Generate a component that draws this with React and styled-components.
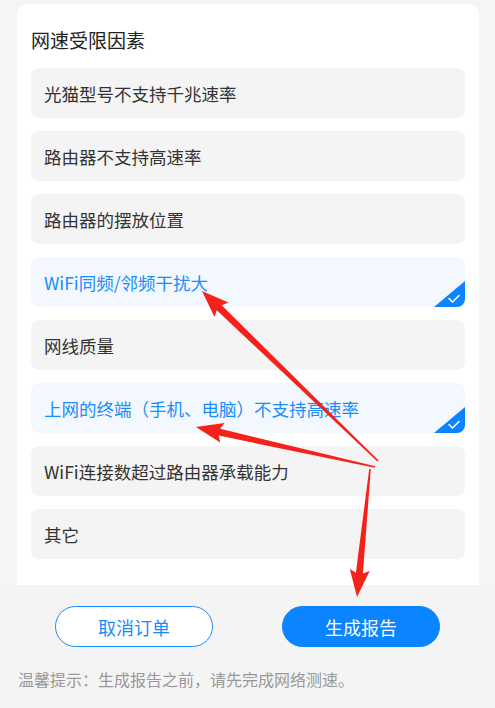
import React from 'react';
import styled, { createGlobalStyle } from 'styled-components';

const GlobalStyle = createGlobalStyle`
  html, body {
    margin: 0;
    padding: 0;
    background: #f5f5f5;
  }
  body {
    font-family: "Noto Sans CJK SC", "Noto Sans", sans-serif;
  }
`;

const Page = styled.div`
  position: relative;
  width: 495px;
  height: 708px;
  overflow: hidden;
  background: #f5f5f5;
  display: flex;
  flex-direction: column;
`;

const Card = styled.section`
  margin: 4px 16px 0 17px;
  padding: 22px 14px 26px;
  background: #fff;
  border-radius: 10px 10px 0 0;
`;

const Title = styled.h2`
  margin: 0 0 14px;
  font-size: 19px;
  font-weight: 400;
  line-height: 28px;
  color: #222;
`;

const List = styled.div`
  display: flex;
  flex-direction: column;
  gap: 13px;
`;

const Item = styled.div`
  position: relative;
  height: 50px;
  display: flex;
  align-items: center;
  padding-left: 13px;
  border-radius: 8px;
  overflow: hidden;
  font-size: 17.5px;
  color: ${p => (p.$active ? '#1a8cff' : '#333')};
  background: ${p => (p.$active ? '#f3f8fe' : '#f4f4f4')};
`;

const Corner = styled.svg`
  position: absolute;
  right: 0;
  bottom: 0;
  width: 31px;
  height: 26px;
`;

const Footer = styled.footer`
  flex: 1;
  background: #f4f4f4;
  padding-top: 21px;
`;

const Buttons = styled.div`
  display: flex;
  justify-content: center;
  gap: 69px;
`;

const Button = styled.button`
  width: 158px;
  height: 41px;
  border-radius: 21px;
  font-family: inherit;
  font-size: 18px;
  border: 1.5px solid #1a8cff;
  color: ${p => (p.$primary ? '#fff' : '#1a8cff')};
  background: ${p => (p.$primary ? '#0a84ff' : '#fff')};
  ${p => p.$primary && 'border-color: #0a84ff;'}
`;

const Hint = styled.p`
  margin: 20px 0 0 18px;
  font-size: 16px;
  line-height: 24px;
  color: #999;
`;

const Overlay = styled.svg`
  position: absolute;
  left: 0;
  top: 0;
  width: 495px;
  height: 708px;
  pointer-events: none;
`;

const items = [
  { text: '光猫型号不支持千兆速率' },
  { text: '路由器不支持高速率' },
  { text: '路由器的摆放位置' },
  { text: 'WiFi同频/邻频干扰大', active: true },
  { text: '网线质量' },
  { text: '上网的终端（手机、电脑）不支持高速率', active: true },
  { text: 'WiFi连接数超过路由器承载能力' },
  { text: '其它' },
];

function arrowPoints([x1, y1], [x2, y2]) {
  const dx = x2 - x1;
  const dy = y2 - y1;
  const len = Math.hypot(dx, dy);
  const ux = dx / len;
  const uy = dy / len;
  const nx = -uy;
  const ny = ux;
  const head = 24;
  const headW = 10;
  const tailW = 0.8;
  const neckW = 3.5;
  const bx = x2 - ux * head;
  const by = y2 - uy * head;
  const pts = [
    [x1 + nx * tailW, y1 + ny * tailW],
    [bx + nx * neckW, by + ny * neckW],
    [bx + nx * headW - ux * 3, by + ny * headW - uy * 3],
    [x2, y2],
    [bx - nx * headW - ux * 3, by - ny * headW - uy * 3],
    [bx - nx * neckW, by - ny * neckW],
    [x1 - nx * tailW, y1 - ny * tailW],
  ];
  return pts.map(p => p.map(v => v.toFixed(1)).join(',')).join(' ');
}

const arrows = [
  [[378, 461], [202, 291]],
  [[375, 467], [196, 427]],
  [[370, 469], [357, 597]],
];

export default function App() {
  return (
    <Page>
      <GlobalStyle />
      <Card>
        <Title>网速受限因素</Title>
        <List>
          {items.map(item => (
            <Item key={item.text} $active={item.active}>
              {item.text}
              {item.active && (
                <Corner viewBox="0 0 31 26">
                  <path d="M31 0 V26 H0 Z" fill="#0a84ff" />
                  <path d="M15 17.5 L18.5 21 L25 14.5" fill="none" stroke="#fff" strokeWidth="1.6" strokeLinecap="round" strokeLinejoin="round" />
                </Corner>
              )}
            </Item>
          ))}
        </List>
      </Card>
      <Footer>
        <Buttons>
          <Button>取消订单</Button>
          <Button $primary>生成报告</Button>
        </Buttons>
        <Hint>温馨提示：生成报告之前，请先完成网络测速。</Hint>
      </Footer>
      <Overlay viewBox="0 0 495 708">
        {arrows.map(([a, b], i) => (
          <polygon key={i} points={arrowPoints(a, b)} fill="#f5221b" />
        ))}
      </Overlay>
    </Page>
  );
}
